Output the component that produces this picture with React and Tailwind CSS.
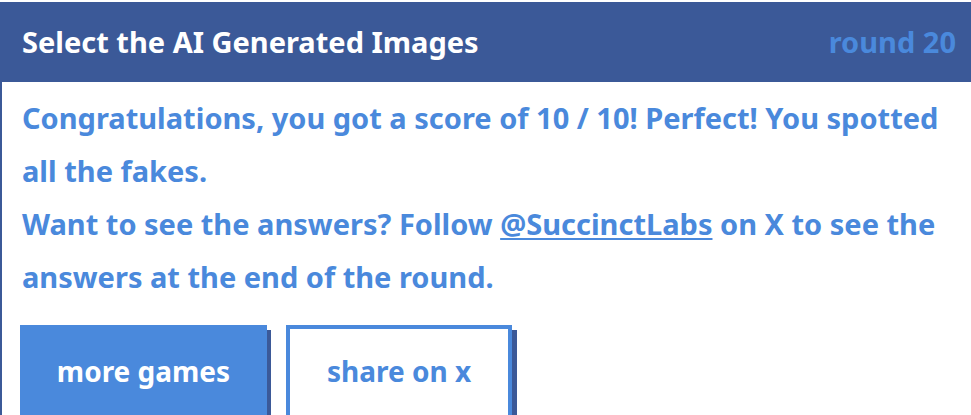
export default function App() {
  return (
    <div className="min-h-screen bg-white pt-[2px] font-['Noto_Sans',sans-serif] overflow-hidden">
      <div className="w-[1000px] border-l-2 border-[#3b5998]">
        <header className="bg-[#3b5998] flex items-center justify-between pr-[44px] py-5 -ml-[2px] pl-[22px]">
          <h1 className="text-white font-bold text-[29px] leading-[40px]">Select the AI Generated Images</h1>
          <span className="text-[#4a89dc] font-bold text-[29px] leading-[40px]">round 20</span>
        </header>

        <main className="pl-5 pr-[40px] pt-[9px]">
          <div className="text-[#4a89dc] font-bold text-[29px] leading-[53px]">
            <p>Congratulations, you got a score of 10 / 10! Perfect! You spotted all the fakes.</p>
            <p>
              Want to see the answers? Follow{" "}
              <a href="#" className="underline underline-offset-[3px] decoration-2">@SuccinctLabs</a>{" "}
              on X to see the answers at the end of the round.
            </p>
          </div>

          <div className="flex gap-[19px] mt-[22px] -ml-[2px]">
            <button className="bg-[#4a89dc] text-white font-bold text-[28px] leading-[42px] w-[247px] pt-[25px] pb-[30px] shadow-[4px_5px_0_#3b5998]">
              more games
            </button>
            <button className="bg-white border-4 border-[#4a89dc] text-[#4a89dc] font-bold text-[28px] leading-[42px] w-[226px] pt-[21px] pb-[26px] shadow-[5px_5px_0_#3b5998]">
              share on x
            </button>
          </div>
        </main>
      </div>
    </div>
  );
}
